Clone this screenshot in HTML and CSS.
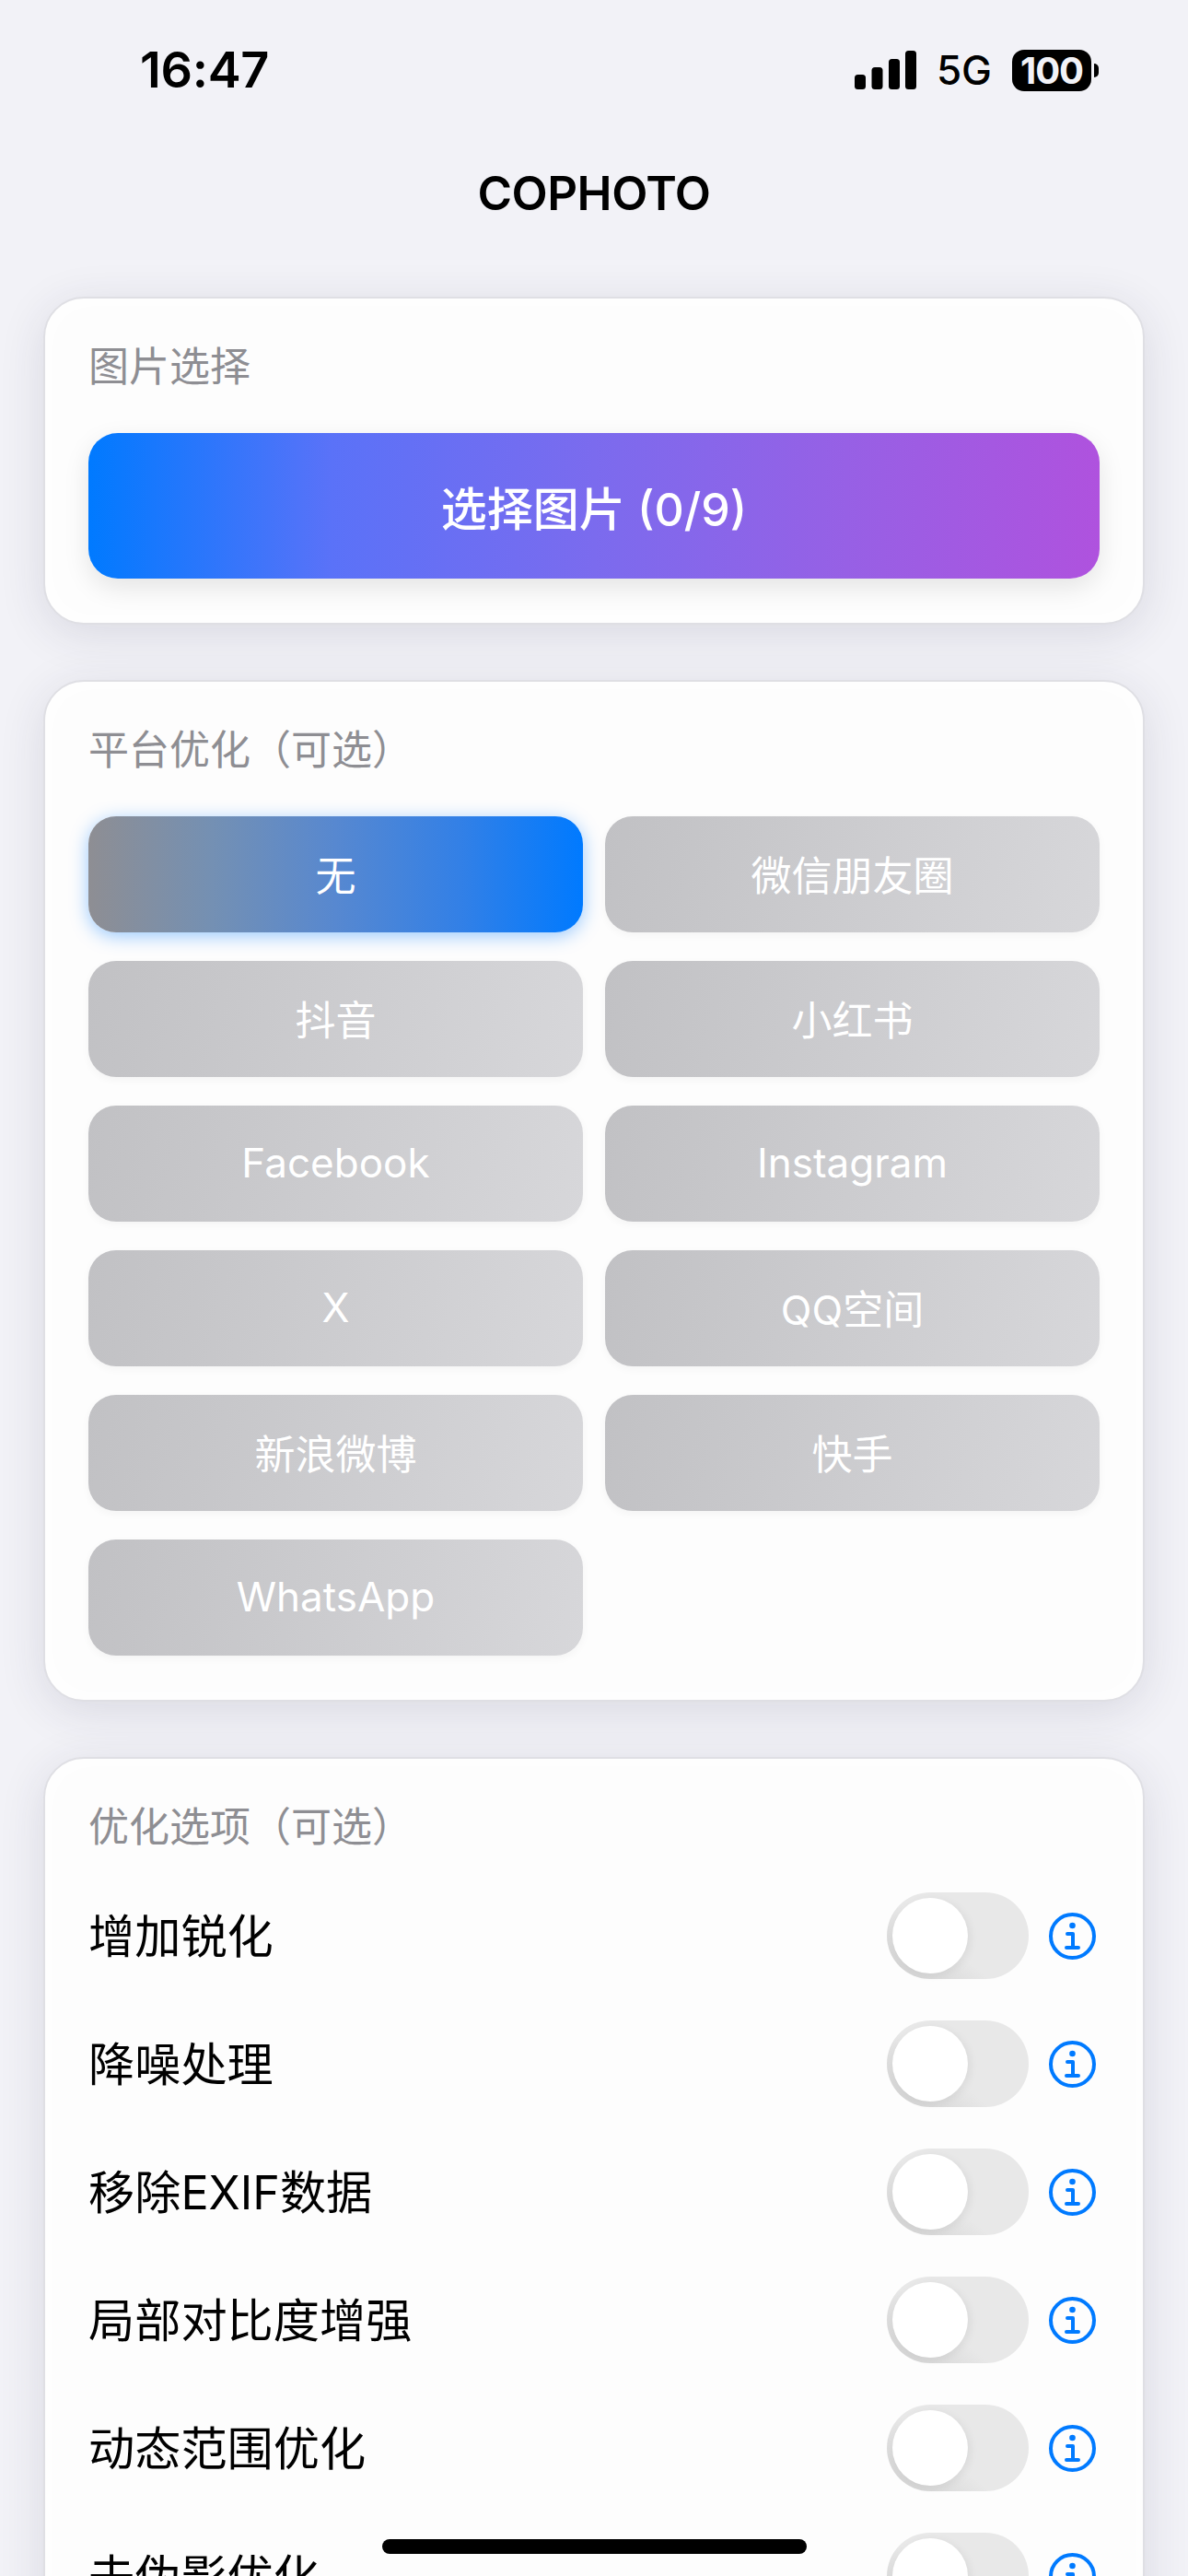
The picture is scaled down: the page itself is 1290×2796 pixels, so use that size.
FILE: index.html
```html
<!DOCTYPE html>
<html lang="zh-CN">
<head>
<meta charset="utf-8">
<title>COPHOTO</title>
<link rel="stylesheet" href="styles.css">
</head>
<body>
<div class="app">
  <header class="status">
    <span class="time">16:47</span>
    <div class="status-right">
      <svg class="signal" width="67" height="42" viewBox="0 0 67 42"><rect x="0" y="26" width="12" height="16" rx="3.5"/><rect x="18.500" y="18" width="12" height="24" rx="3.500"/><rect x="37" y="9" width="12" height="33" rx="3.500"/><rect x="55" y="0" width="12" height="42" rx="3.500"/></svg>
      <span class="net">5G</span>
      <div class="battery"><span class="battery-body">100</span><span class="battery-nub"></span></div>
    </div>
  </header>
  <div class="nav">COPHOTO</div>
  <main class="cards">
    <section class="card">
      <h2 class="card-title">图片选择</h2>
      <button class="pick">选择图片 (0/9)</button>
    </section>
    <section class="card">
      <h2 class="card-title">平台优化（可选）</h2>
      <div class="platforms">
        <div class="platform active">无</div>
        <div class="platform">微信朋友圈</div>
        <div class="platform">抖音</div>
        <div class="platform">小红书</div>
        <div class="platform">Facebook</div>
        <div class="platform">Instagram</div>
        <div class="platform">X</div>
        <div class="platform">QQ空间</div>
        <div class="platform">新浪微博</div>
        <div class="platform">快手</div>
        <div class="platform">WhatsApp</div>
      </div>
    </section>
    <section class="card">
      <h2 class="card-title">优化选项（可选）</h2>
      <div class="options">
        <div class="option"><span class="option-label">增加锐化</span><div class="track"><span class="knob"></span></div><svg class="info" viewBox="0 0 51 51"><circle cx="25.500" cy="25.500" r="23.500"/><circle class="dot" cx="25.500" cy="14" r="3.300"/><path d="M20 23h6v15M19 38h13"/></svg></div>
        <div class="option"><span class="option-label">降噪处理</span><div class="track"><span class="knob"></span></div><svg class="info" viewBox="0 0 51 51"><circle cx="25.500" cy="25.500" r="23.500"/><circle class="dot" cx="25.500" cy="14" r="3.300"/><path d="M20 23h6v15M19 38h13"/></svg></div>
        <div class="option"><span class="option-label">移除EXIF数据</span><div class="track"><span class="knob"></span></div><svg class="info" viewBox="0 0 51 51"><circle cx="25.500" cy="25.500" r="23.500"/><circle class="dot" cx="25.500" cy="14" r="3.300"/><path d="M20 23h6v15M19 38h13"/></svg></div>
        <div class="option"><span class="option-label">局部对比度增强</span><div class="track"><span class="knob"></span></div><svg class="info" viewBox="0 0 51 51"><circle cx="25.500" cy="25.500" r="23.500"/><circle class="dot" cx="25.500" cy="14" r="3.300"/><path d="M20 23h6v15M19 38h13"/></svg></div>
        <div class="option"><span class="option-label">动态范围优化</span><div class="track"><span class="knob"></span></div><svg class="info" viewBox="0 0 51 51"><circle cx="25.500" cy="25.500" r="23.500"/><circle class="dot" cx="25.500" cy="14" r="3.300"/><path d="M20 23h6v15M19 38h13"/></svg></div>
        <div class="option"><span class="option-label">去伪影优化</span><div class="track"><span class="knob"></span></div><svg class="info" viewBox="0 0 51 51"><circle cx="25.500" cy="25.500" r="23.500"/><circle class="dot" cx="25.500" cy="14" r="3.300"/><path d="M20 23h6v15M19 38h13"/></svg></div>
      </div>
    </section>
  </main>
  <div class="home-indicator"></div>
</div>
</body>
</html>
```
FILE: styles.css
```css
* { box-sizing: border-box; }
html, body { margin: 0; padding: 0; }
body {
  background: #f2f2f7;
  color: #000;
  font-family: Inter, "Noto Sans CJK SC", sans-serif;
}
.app {
  position: relative;
  width: 1290px;
  height: 2796px;
  overflow: hidden;
  background: #f2f2f7;
}
.status {
  height: 152px;
  display: flex;
  align-items: center;
  justify-content: space-between;
  padding: 0 97px 0 152px;
}
.time { font-size: 54px; font-weight: 600; line-height: 60px; letter-spacing: -0.3px; }
.status-right { display: flex; align-items: center; }
.signal { fill: #000; display: block; margin-right: 22px; }
.net { font-size: 44px; font-weight: 500; line-height: 50px; margin-right: 22px; }
.battery { display: flex; align-items: center; gap: 3px; }
.battery-body {
  width: 86px;
  height: 45px;
  border-radius: 13px;
  background: #000;
  color: #f2f2f7;
  font-size: 40px;
  font-weight: 700;
  line-height: 45px;
  text-align: center;
  letter-spacing: -1px;
}
.battery-nub {
  width: 5px;
  height: 15px;
  background: #000;
  border-radius: 0 8px 8px 0;
}
.nav {
  height: 114px;
  margin-bottom: 56px;
  display: flex;
  align-items: center;
  justify-content: center;
  font-size: 51px;
  font-weight: 600;
  letter-spacing: -0.5px;
}
.cards {
  display: flex;
  flex-direction: column;
  gap: 60px;
  padding: 0 47px 0 47px;
}
.card {
  background: #fdfdfd;
  border: 2px solid #dfdfe4;
  border-radius: 44px;
  padding: 46px 47px 48px 47px;
  box-shadow: 0 10px 50px rgba(40, 40, 70, 0.12), inset 0 0 36px #fff;
}
.card-title {
  margin: 0 0 44px;
  font-size: 44px;
  font-weight: 400;
  line-height: 56px;
  color: #8e8e93;
}
.pick {
  display: block;
  width: 100%;
  height: 158px;
  border: 0;
  border-radius: 32px;
  background: linear-gradient(90deg, #007aff 0%, #5a72f8 24%, #7b6bee 50%, #9760e5 75%, #af52de 100%);
  color: #fff;
  font-family: inherit;
  font-size: 50px;
  font-weight: 500;
  box-shadow: 0 10px 28px rgba(0, 0, 0, 0.1);
}
.platforms {
  display: grid;
  grid-template-columns: 1fr 1fr;
  column-gap: 24px;
  row-gap: 31px;
}
.platform {
  height: 126px;
  display: flex;
  align-items: center;
  justify-content: center;
  padding-bottom: 2px;
  border-radius: 30px;
  background: linear-gradient(100deg, #c1c1c4, #d7d7da);
  color: #fff;
  font-size: 44px;
  font-weight: 400;
  box-shadow: 0 3px 10px rgba(0, 0, 0, 0.04);
}
.platform.active {
  background: linear-gradient(90deg, #8e8e93 0%, #7490b3 25%, #5788d0 50%, #3380e6 75%, #007aff 100%);
  color: #fff;
  box-shadow: 0 4px 20px rgba(0, 122, 255, 0.4);
}
.options {
  display: flex;
  flex-direction: column;
  gap: 45px;
  padding-right: 4px;
  margin-top: -1px;
}
.option { display: flex; align-items: center; height: 94px; }
.option-label { flex: 1; padding-top: 2px; font-size: 50.2px; font-weight: 400; line-height: 60px; }
.track {
  width: 154px;
  height: 94px;
  padding: 6px 0 0 6px;
  border-radius: 47px;
  background: linear-gradient(40deg, #d3d3d3 8%, #e8e8e8 42%);
  margin-right: 22px;
}
.knob {
  display: block;
  width: 82px;
  height: 82px;
  border-radius: 50%;
  background: #fff;
  box-shadow: 3px 2px 10px rgba(0, 0, 0, 0.06);
}
.info {
  width: 51px;
  height: 51px;
  fill: none;
  stroke: #007aff;
  stroke-width: 4;
  stroke-linecap: round;
  stroke-linejoin: round;
}
.info .dot { fill: #007aff; stroke: none; }
.home-indicator {
  position: absolute;
  left: 415px;
  top: 2756px;
  width: 461px;
  height: 16px;
  border-radius: 8px;
  background: #000;
}
```
